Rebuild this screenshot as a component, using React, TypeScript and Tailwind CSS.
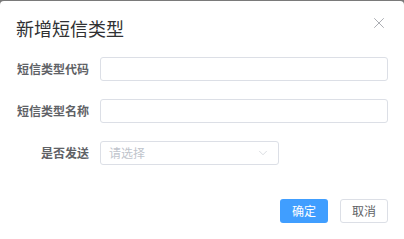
import { ChevronDown, X } from 'lucide-react'

const font = { fontFamily: '"Noto Sans CJK SC", "Noto Sans", sans-serif' }

function Field({ label, children }: { label: string; children: React.ReactNode }) {
  return (
    <div className="flex items-center h-6">
      <label className="w-[89px] shrink-0 text-right text-[12px] font-bold leading-6 text-[#606266]">{label}</label>
      <div className="ml-[11px] flex-1 flex">{children}</div>
    </div>
  )
}

export default function App() {
  return (
    <div className="w-[404px] h-[239px] overflow-hidden bg-[#7a7a7a] pt-px" style={font}>
      <div className="h-[260px] rounded-[4px] bg-white">
        <header className="flex items-start justify-between px-4 pt-[15px]">
          <h1 className="text-[18px] leading-6 text-[#303133]">新增短信类型</h1>
          <button className="-mt-[2px] text-[#909399]">
            <X size={18} strokeWidth={1} />
          </button>
        </header>

        <form className="mt-[17px] flex flex-col gap-[18px] pr-4">
          <Field label="短信类型代码">
            <input className="h-6 w-full rounded-[3px] border border-[#dcdfe6] px-2 text-[12px] outline-none" />
          </Field>
          <Field label="短信类型名称">
            <input className="h-6 w-full rounded-[3px] border border-[#dcdfe6] px-2 text-[12px] outline-none" />
          </Field>
          <Field label="是否发送">
            <div className="flex h-6 w-[179px] items-center justify-between rounded-[3px] border border-[#dcdfe6] pl-2 pr-2">
              <span className="text-[12px] text-[#c0c4cc]">请选择</span>
              <ChevronDown size={14} strokeWidth={1} className="text-[#c0c4cc]" />
            </div>
          </Field>
        </form>

        <footer className="mt-[34px] flex justify-end gap-3 pr-4">
          <button className="h-6 w-12 rounded-[3px] bg-[#409eff] text-[12px] text-white">确定</button>
          <button className="h-6 w-12 rounded-[3px] border border-[#dcdfe6] bg-white text-[12px] text-[#606266]">取消</button>
        </footer>
      </div>
    </div>
  )
}
